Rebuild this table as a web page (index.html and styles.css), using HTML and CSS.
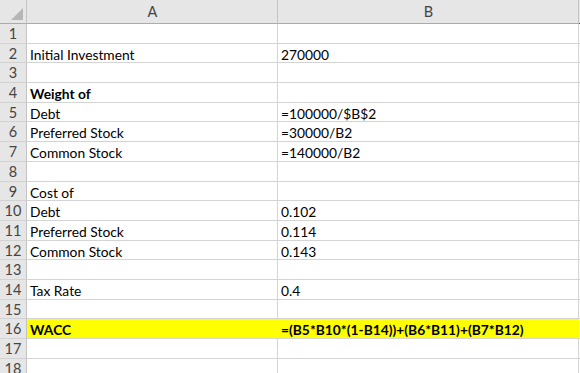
FILE: index.html
```html
<!DOCTYPE html>
<html>
<head>
    <title>WACC</title>
    <meta name="viewport" content="width=device-width, initial-scale=1.0">
    <link rel="stylesheet" href="styles.css">
</head>
<body>
    <div class="sheet">
        <!-- 列标题 -->
        <div class="corner"><span class="select-all"></span></div>
        <div class="col-head">A</div>
        <div class="col-head">B</div>
        <div class="col-head col-edge"></div>

        <div class="row-head">1</div><div class="cell"></div><div class="cell"></div><div class="cell edge"></div>
        <div class="row-head">2</div><div class="cell">Initial Investment</div><div class="cell">270000</div><div class="cell edge"></div>
        <div class="row-head">3</div><div class="cell"></div><div class="cell"></div><div class="cell edge"></div>
        <div class="row-head">4</div><div class="cell bold">Weight of</div><div class="cell"></div><div class="cell edge"></div>
        <div class="row-head">5</div><div class="cell">Debt</div><div class="cell">=100000/$B$2</div><div class="cell edge"></div>
        <div class="row-head">6</div><div class="cell">Preferred Stock</div><div class="cell">=30000/B2</div><div class="cell edge"></div>
        <div class="row-head">7</div><div class="cell">Common Stock</div><div class="cell">=140000/B2</div><div class="cell edge"></div>
        <div class="row-head">8</div><div class="cell"></div><div class="cell"></div><div class="cell edge"></div>
        <div class="row-head">9</div><div class="cell">Cost of</div><div class="cell"></div><div class="cell edge"></div>
        <div class="row-head">10</div><div class="cell">Debt</div><div class="cell">0.102</div><div class="cell edge"></div>
        <div class="row-head">11</div><div class="cell">Preferred Stock</div><div class="cell">0.114</div><div class="cell edge"></div>
        <div class="row-head">12</div><div class="cell">Common Stock</div><div class="cell">0.143</div><div class="cell edge"></div>
        <div class="row-head">13</div><div class="cell"></div><div class="cell"></div><div class="cell edge"></div>
        <div class="row-head">14</div><div class="cell">Tax Rate</div><div class="cell">0.4</div><div class="cell edge"></div>
        <div class="row-head">15</div><div class="cell"></div><div class="cell"></div><div class="cell edge"></div>
        <div class="row-head">16</div><div class="cell bold highlight">WACC</div><div class="cell bold highlight">=(B5*B10*(1-B14))+(B6*B11)+(B7*B12)</div><div class="cell edge"></div>
        <div class="row-head">17</div><div class="cell"></div><div class="cell"></div><div class="cell edge"></div>
        <div class="row-head">18</div><div class="cell"></div><div class="cell"></div><div class="cell edge"></div>
    </div>
</body>
</html>
```

FILE: styles.css
```css
/* 基础样式 */
body {
    margin: 0;
    padding: 0;
    background: #ffffff;
    font-family: Lato, "Open Sans", "Liberation Sans", sans-serif;
    font-size: 13.8px;
    color: #000;
    overflow: hidden;
}

.sheet {
    display: grid;
    grid-template-columns: 27px 251px 301px 1px;
    grid-template-rows: 24px repeat(18, 19.7px);
}

.corner,
.col-head,
.row-head,
.cell {
    box-sizing: border-box;
    overflow: hidden;
    white-space: nowrap;
}

/* 标题栏 */
.corner {
    position: relative;
    background: #e6e6e6;
    border-right: 1px solid #c4c4c4;
    border-bottom: 1px solid #ababab;
}

.select-all {
    position: absolute;
    right: 3px;
    bottom: 3px;
    width: 0;
    height: 0;
    border-left: 12px solid transparent;
    border-bottom: 12px solid #b6b6b6;
}

.col-head {
    background: #e6e6e6;
    border-right: 1px solid #c4c4c4;
    border-bottom: 1px solid #ababab;
    color: #444;
    font-size: 14.5px;
    text-align: center;
    line-height: 23px;
    padding-left: 1px;
}

.col-edge {
    border-right: none;
    border-bottom: 1px solid #217346;
}

.row-head {
    background: #e6e6e6;
    border-right: 1px solid #c4c4c4;
    border-bottom: 1px solid #d2d2d2;
    color: #444;
    font-size: 14.5px;
    text-align: center;
    line-height: 19px;
}

/* 单元格 */
.cell {
    border-right: 1px solid #d4d4d4;
    border-bottom: 1px solid #d4d4d4;
    padding-left: 3px;
    padding-top: 1px;
    line-height: 19px;
}

.edge {
    border-right: none;
    padding: 0;
}

.bold {
    font-weight: bold;
}

.highlight {
    background: #ffff00;
    border-right-color: #ffff00;
}
```
